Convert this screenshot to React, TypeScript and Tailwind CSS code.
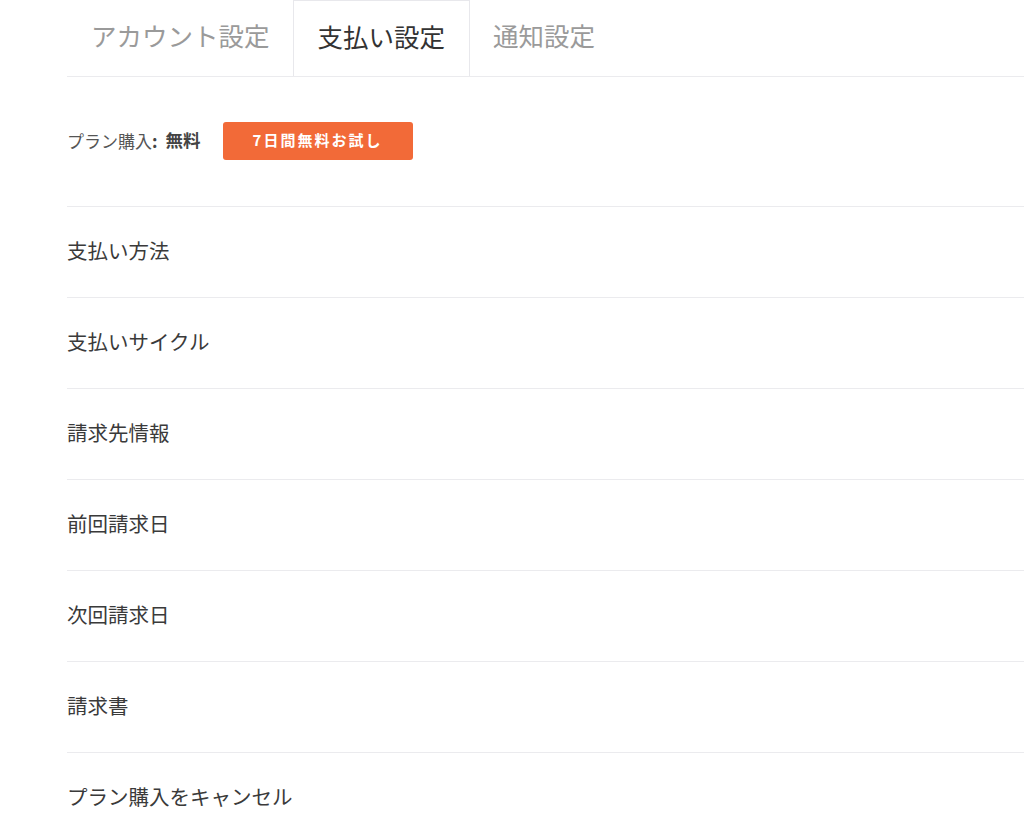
import React from "react";

const rows = [
  "支払い方法",
  "支払いサイクル",
  "請求先情報",
  "前回請求日",
  "次回請求日",
  "請求書",
  "プラン購入をキャンセル",
];

const font = { fontFamily: '"Noto Sans CJK JP", "Noto Sans", sans-serif' };

function Tabs() {
  return (
    <div className="flex h-[77px] border-b border-[#ebebee]">
      <div className="flex items-center pb-[5px] pl-[24px] pr-[23px] text-[25.5px] text-[#9a9a9a]">アカウント設定</div>
      <div className="flex items-center pb-[5px] px-[24px] text-[25.5px] text-[#333] border-x border-t border-[#e8e8ec] bg-white">支払い設定</div>
      <div className="flex items-center pb-[5px] px-[23px] text-[25.5px] text-[#9a9a9a]">通知設定</div>
    </div>
  );
}

export default function App() {
  return (
    <div className="min-h-screen bg-white pl-[67px]" style={font}>
      <Tabs />
      <div className="flex items-center h-[130px] pb-[2px] border-b border-[#ebebee]">
        <span className="text-[17px] text-[#555]">プラン購入</span>
        <span className="text-[17px] font-bold text-[#444]">:</span>
        <span className="ml-[8px] text-[17.5px] font-semibold text-[#444]">無料</span>
        <button className="ml-[22px] w-[190px] h-[38px] rounded-[3px] bg-[#f26a38] text-white text-[15px] font-bold tracking-[2px]">
          7日間無料お試し
        </button>
      </div>
      {rows.map((r) => (
        <div key={r} className="flex items-center h-[91px] pb-[3px] border-b border-[#ebebee] text-[20.5px] text-[#3a3a3a]">
          {r}
        </div>
      ))}
    </div>
  );
}
